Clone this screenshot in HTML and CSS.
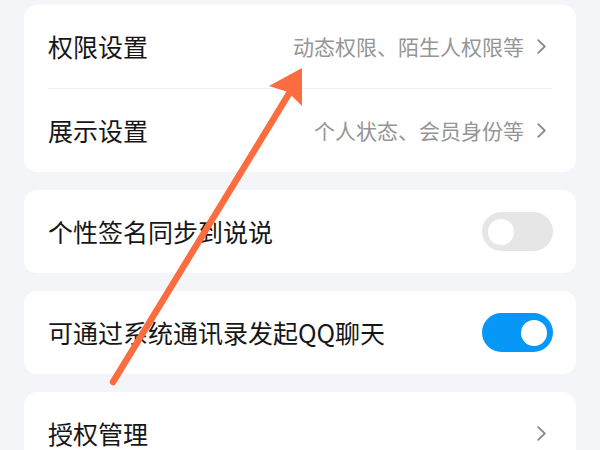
FILE: index.html
```html
<!DOCTYPE html>
<html lang="zh-CN">
<head>
<meta charset="utf-8">
<link rel="stylesheet" href="styles.css">
</head>
<body>
<div class="page">
  <div class="card">
    <div class="row">
      <span class="label">权限设置</span>
      <span class="value">动态权限、陌生人权限等</span>
      <svg class="chev" viewBox="0 0 9 15"><path d="M1.2 1.2 L7.8 7.5 L1.2 13.8" /></svg>
    </div>
    <div class="divider"></div>
    <div class="row">
      <span class="label">展示设置</span>
      <span class="value">个人状态、会员身份等</span>
      <svg class="chev" viewBox="0 0 9 15"><path d="M1.2 1.2 L7.8 7.5 L1.2 13.8" /></svg>
    </div>
  </div>
  <div class="card">
    <div class="row">
      <span class="label">个性签名同步到说说</span>
      <span class="toggle"><span class="knob"></span></span>
    </div>
  </div>
  <div class="card">
    <div class="row">
      <span class="label">可通过系统通讯录发起QQ聊天</span>
      <span class="toggle on"><span class="knob"></span></span>
    </div>
  </div>
  <div class="card">
    <div class="row">
      <span class="label">授权管理</span>
      <span class="value"></span>
      <svg class="chev" viewBox="0 0 9 15"><path d="M1.2 1.2 L7.8 7.5 L1.2 13.8" /></svg>
    </div>
  </div>
</div>
<svg class="arrow" viewBox="0 0 600 450" width="600" height="450">
  <line x1="113" y1="382" x2="290" y2="92" />
  <polygon points="302,68 269,86 288,92 302,106" />
</svg>
</body>
</html>
```

FILE: styles.css
```css
html, body {
  margin: 0;
  padding: 0;
  width: 600px;
  height: 450px;
  overflow: hidden;
  background: #f4f5f9;
  font-family: "Noto Sans CJK SC", "Noto Sans", sans-serif;
}

.page {
  display: flex;
  flex-direction: column;
  gap: 18px;
  padding: 5px 24px 0 24px;
  height: 445px;
  overflow: hidden;
}

.card {
  background: #ffffff;
  border-radius: 13px;
  display: flex;
  flex-direction: column;
  flex-shrink: 0;
}

.row {
  height: 83px;
  display: flex;
  align-items: center;
  padding: 0 24px;
}

.label {
  font-size: 25px;
  color: #161616;
  flex: 1;
  white-space: nowrap;
  line-height: 1;
}

.value {
  font-size: 21px;
  color: #959595;
  white-space: nowrap;
  line-height: 1;
}

.chev {
  width: 9px;
  height: 15px;
  margin-left: 13px;
  margin-right: 6px;
  fill: none;
  stroke: #8a8a8a;
  stroke-width: 1.8;
  stroke-linecap: round;
  stroke-linejoin: round;
}

.divider {
  height: 1px;
  background: #f0f0f2;
  margin: 0 24px;
}

.toggle {
  width: 71px;
  height: 39px;
  border-radius: 20px;
  background: #e6e6e6;
  display: flex;
  align-items: center;
  padding: 0 6px;
  box-sizing: border-box;
  margin-right: -1px;
}

.toggle.on {
  background: #0797f6;
  justify-content: flex-end;
}

.knob {
  width: 26px;
  height: 26px;
  border-radius: 50%;
  background: #ffffff;
}

.arrow {
  position: absolute;
  left: 0;
  top: 0;
  pointer-events: none;
}

.arrow line {
  stroke: #fb6c3e;
  stroke-width: 6.5;
  stroke-linecap: round;
}

.arrow polygon {
  fill: #fb6c3e;
}
```
